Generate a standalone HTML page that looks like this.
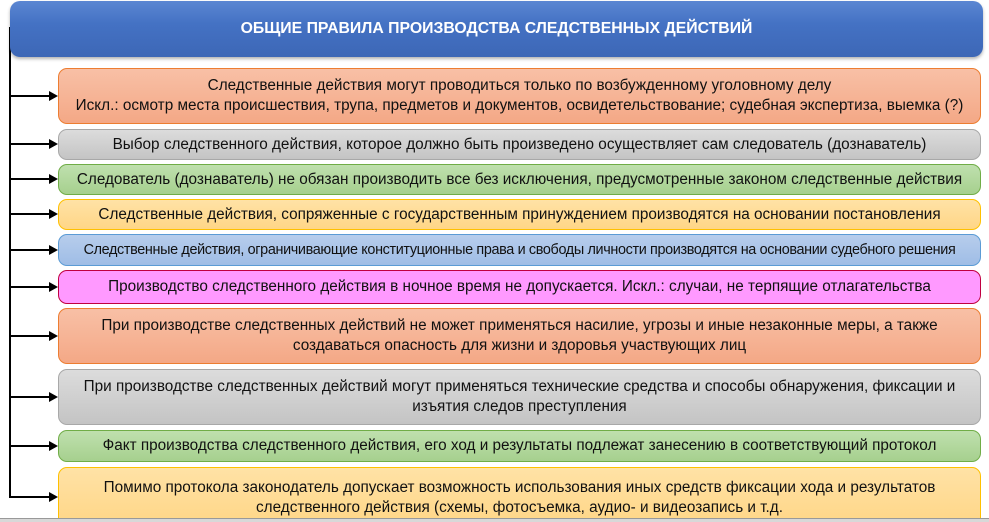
<!DOCTYPE html>
<html style="overflow:hidden"><head><meta charset="utf-8"><style>
html,body{margin:0;width:989px;height:522px;overflow:hidden}
body{background:#fff;position:relative;font-family:"Liberation Sans",sans-serif;}
.h{position:absolute;left:10px;top:1px;width:973px;height:56px;border-radius:10px;background:linear-gradient(#5b86d2,#4472c4 40%,#3d67b6);box-shadow:0 2px 3px rgba(0,0,0,.3);color:#fff;font-weight:bold;font-size:15.8px;display:flex;align-items:center;justify-content:center;}
.b{position:absolute;left:58px;width:923px;border-radius:9px;border:1px solid;display:flex;align-items:center;justify-content:center;text-align:center;font-size:15.3px;line-height:20px;color:#111;box-sizing:border-box;}
.o{background:linear-gradient(#f8c0a6,#f4a886);border-color:#ed7d31}
.g{background:linear-gradient(#dcdcdc,#c4c4c4);border-color:#a8a8a8}
.gr{background:linear-gradient(#bfe0ae,#a6d08e);border-color:#70ad47}
.y{background:linear-gradient(#ffe2a6,#ffd686);border-color:#ffc000}
.bl{background:linear-gradient(#b7cdec,#9fbde6);border-color:#5b9bd5}
.p{background:#ff99ff;border-color:#c00040}
.vl{position:absolute;left:9px;top:27px;width:2px;height:471px;background:#000}
.a{position:absolute;left:10px;width:40px;height:2px;background:#000}
.a:after{content:"";position:absolute;right:-8px;top:-4px;border-left:9px solid #000;border-top:5px solid transparent;border-bottom:5px solid transparent}
.bot{position:absolute;left:0;top:518px;width:989px;height:4px;background:#d8d8d8;border-top:1px solid #999}
</style></head><body>
<div class="vl"></div>
<div class="h">ОБЩИЕ ПРАВИЛА ПРОИЗВОДСТВА СЛЕДСТВЕННЫХ ДЕЙСТВИЙ</div>
<div class="b o" style="top:68px;height:56px">Следственные действия могут проводиться только по возбужденному уголовному делу<br>Искл.: осмотр места происшествия, трупа, предметов и документов, освидетельствование; судебная экспертиза, выемка (?)</div>
<div class="b g" style="top:129px;height:31px">Выбор следственного действия, которое должно быть произведено осуществляет сам следователь (дознаватель)</div>
<div class="b gr" style="top:164px;height:31px">Следователь (дознаватель) не обязан производить все без исключения, предусмотренные законом следственные действия</div>
<div class="b y" style="top:199px;height:31px">Следственные действия, сопряженные с государственным принуждением производятся на основании постановления</div>
<div class="b bl" style="top:234px;height:32px;font-size:14.4px;letter-spacing:-0.35px">Следственные действия, ограничивающие конституционные права и свободы личности производятся на основании судебного решения</div>
<div class="b p" style="top:270px;height:34px">Производство следственного действия в ночное время не допускается. Искл.: случаи, не терпящие отлагательства</div>
<div class="b o" style="top:308px;height:56px">При производстве следственных действий не может применяться насилие, угрозы и иные незаконные меры, а также<br>создаваться опасность для жизни и здоровья участвующих лиц</div>
<div class="b g" style="top:369px;height:56px">При производстве следственных действий могут применяться технические средства и способы обнаружения, фиксации и<br>изъятия следов преступления</div>
<div class="b gr" style="top:430px;height:32px">Факт производства следственного действия, его ход и результаты подлежат занесению в соответствующий протокол</div>
<div class="b y" style="top:467px;height:60px;align-items:flex-start;padding-top:10px">Помимо протокола законодатель допускает возможность использования иных средств фиксации хода и результатов<br>следственного действия (схемы, фотосъемка, аудио- и видеозапись и т.д.</div>
<div class="a" style="top:95px"></div>
<div class="a" style="top:143px"></div>
<div class="a" style="top:178px"></div>
<div class="a" style="top:213px"></div>
<div class="a" style="top:249px"></div>
<div class="a" style="top:286px"></div>
<div class="a" style="top:335px"></div>
<div class="a" style="top:396px"></div>
<div class="a" style="top:445px"></div>
<div class="a" style="top:496px"></div>
<div class="bot"></div>
</body></html>
